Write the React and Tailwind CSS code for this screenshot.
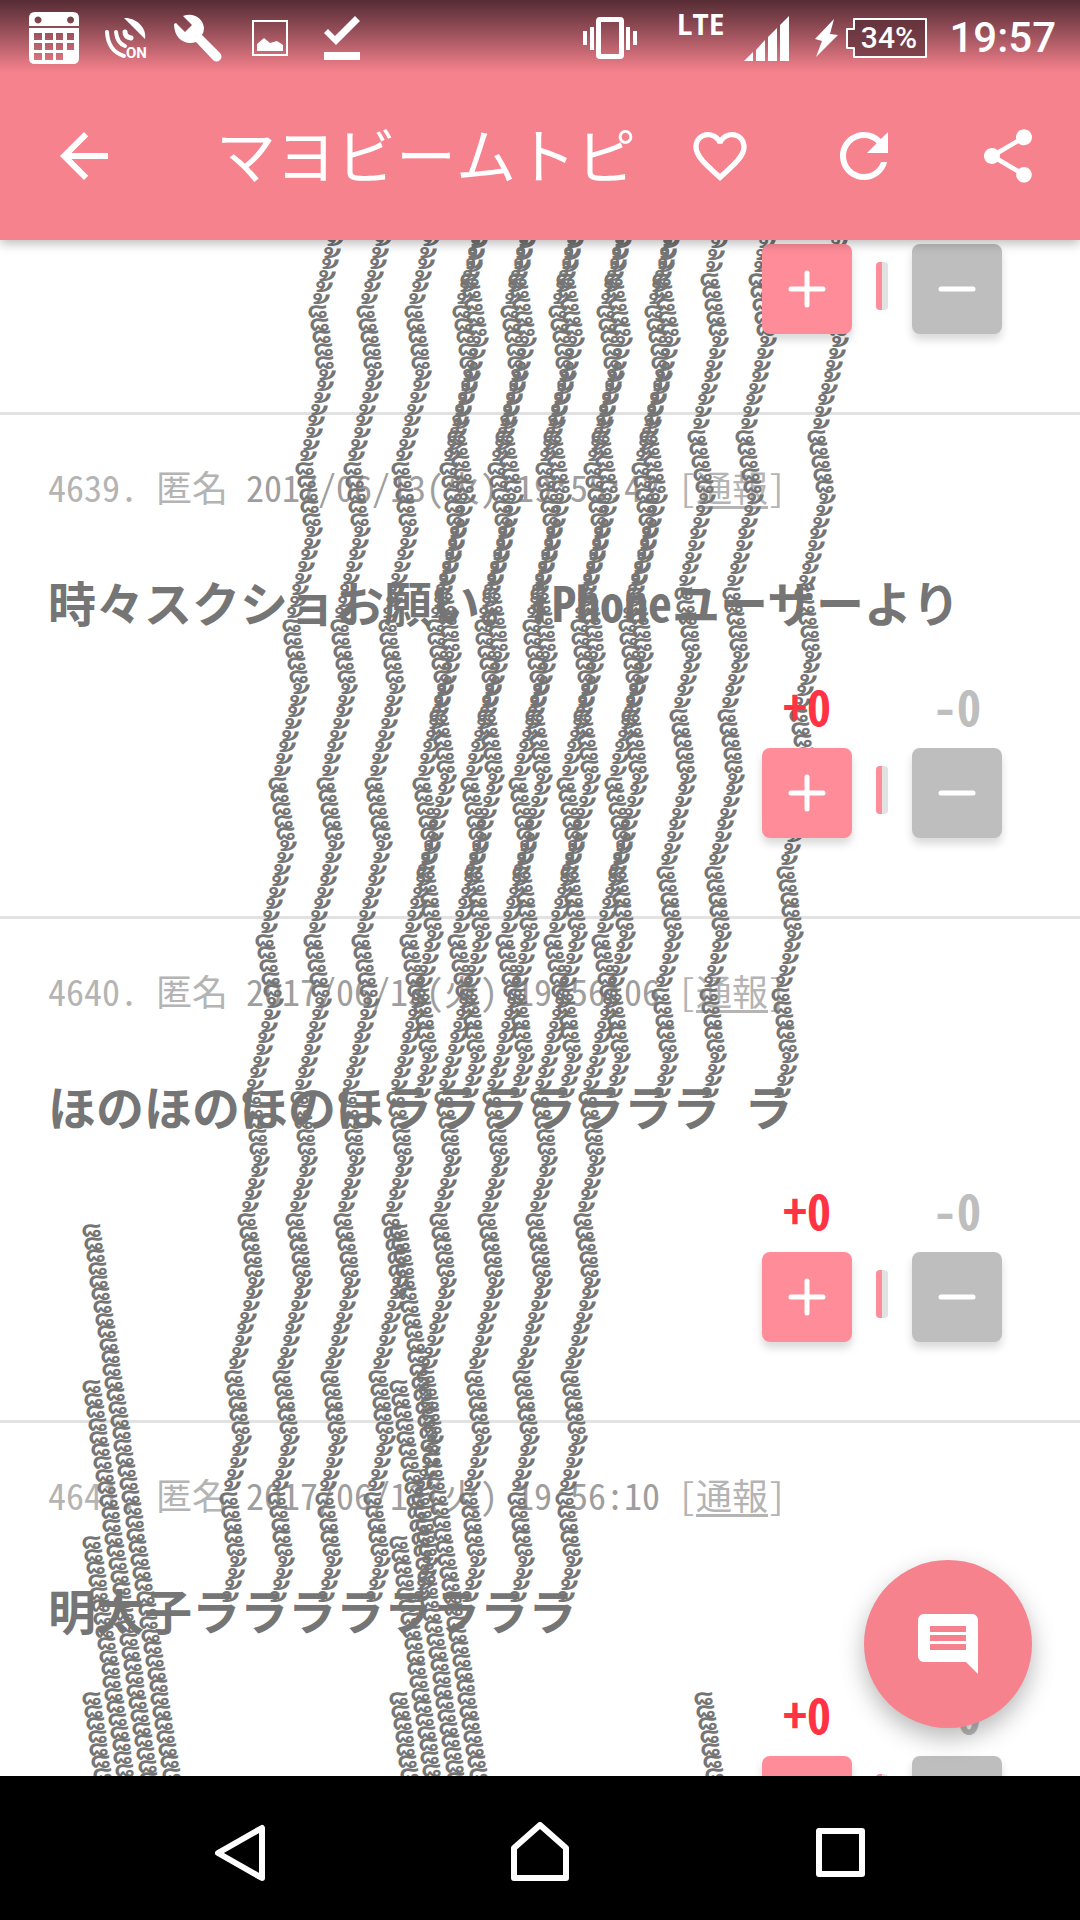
import { MdArrowBack, MdComment, MdFavoriteBorder, MdRefresh, MdShare } from "react-icons/md";

const THO = "\u0e49";
const TAI = "\u0e47";

// marks that pile up over one character, lowest first
const WAVE = [
  ...(THO.repeat(4) + TAI.repeat(5) + THO.repeat(5) + TAI.repeat(5)),
  ...(THO.repeat(8) + TAI.repeat(5) + THO.repeat(5) + TAI.repeat(5)),
  ...(THO.repeat(8) + TAI.repeat(5)).repeat(6),
];

// how far the next mark moves from the one below it
const STEP = {
  [THO + THO]: [2.76, 11.65],
  [THO + TAI]: [-3, 12],
  [TAI + TAI]: [-1.85, 12.65],
  [TAI + THO]: [4.3, 13],
};

const climb = (marks, x0, y0) => {
  let x = x0;
  let y = y0;
  return marks.map((mark, i) => {
    if (i > 0) {
      const [dx, dy] = STEP[marks[i - 1] + mark];
      x += dx;
      y -= dy;
    }
    return { mark, x: Math.round(x), y: Math.round(y) };
  });
};

const POSTS = [
  {
    id: 4639,
    date: "2017/06/13(火) 19:55:42",
    lead: "時々スクショお願い。iPhoneユーザーより",
    beams: "",
    count: 0,
  },
  {
    id: 4640,
    date: "2017/06/13(火) 19:56:06",
    lead: "ほのほのほのほ",
    beams: "ラララララララ ラ",
    count: 71,
  },
  {
    id: 4641,
    date: "2017/06/13(火) 19:56:10",
    lead: "明太子",
    beams: "ララララララララ",
    count: 113,
  },
];

// tops of the beams that rise from posts further down the thread
const RISING = [
  { x: 91, y: 990, count: 44 },
  { x: 91, y: 1146, count: 32 },
  { x: 91, y: 1302, count: 19 },
  { x: 91, y: 1458, count: 7 },
  { x: 398, y: 990, count: 44 },
  { x: 398, y: 1146, count: 32 },
  { x: 398, y: 1302, count: 19 },
  { x: 398, y: 1458, count: 7 },
  { x: 703, y: 1458, count: 7 },
];

const Mark = ({ mark, x, y }) => (
  <span
    className={
      mark === THO
        ? "absolute whitespace-pre text-[44px] leading-[48px]"
        : "absolute whitespace-pre text-[46px] leading-[48px]"
    }
    style={mark === THO ? { left: x - 1, top: y - 10 } : { left: x + 2, top: y - 9 }}
  >
    {"\u00a0" + mark}
  </span>
);

const Beam = ({ points }) => (
  <span
    aria-hidden="true"
    className="pointer-events-none absolute left-0 top-0 font-['Noto_Sans_Thai_Looped',sans-serif] font-medium text-[#757575]"
  >
    {points.map((p, i) => (
      <Mark key={i} {...p} />
    ))}
  </span>
);

const Votes = () => (
  <div className="relative z-20 flex items-end justify-end gap-6 pr-[78px]">
    <div className="flex w-[90px] flex-col items-center gap-[15px]">
      <span className="text-[48px] font-bold leading-[56px] text-[#ff3344]">+0</span>
      <button
        aria-label="プラス"
        className="flex h-[90px] w-full items-center justify-center rounded-lg bg-[#ff8d99] shadow-[0_6px_8px_rgba(0,0,0,0.15)]"
      >
        <svg width="38" height="38" viewBox="0 0 38 38" stroke="#fff" strokeWidth="5" strokeLinecap="round">
          <path d="M3 19H35M19 3V35" />
        </svg>
      </button>
    </div>
    <div className="mb-6 flex h-12 w-3 overflow-hidden rounded bg-[#e2e2e2]">
      <div className="w-1/2 bg-[#ff8d99]" />
    </div>
    <div className="flex w-[90px] flex-col items-center gap-[15px]">
      <span className="text-[48px] font-bold leading-[56px] text-[#bebebe]">-0</span>
      <button
        aria-label="マイナス"
        className="flex h-[90px] w-full items-center justify-center rounded-lg bg-[#bebebe] shadow-[0_6px_8px_rgba(0,0,0,0.15)]"
      >
        <svg width="38" height="38" viewBox="0 0 38 38" stroke="#fff" strokeWidth="5" strokeLinecap="round">
          <path d="M3 19H35" />
        </svg>
      </button>
    </div>
  </div>
);

const Post = ({ post }) => {
  const points = climb(WAVE.slice(0, post.count), 38, 23);

  return (
    <article className="border-b-[3px] border-[#e2e2e2] pb-[78px] pt-[45px]">
      <div className="whitespace-pre px-12 text-[36px] leading-[52px] text-[#b4b4b4]">
        {post.id}. 匿名 <span className="text-[#9e9e9e]">{post.date}</span> [
        <a href="#report" className="underline decoration-[3px] underline-offset-4">通報</a>]
      </div>
      <p className="mt-[53px] whitespace-pre px-12 text-[48px] font-bold leading-[72px] text-[#757575]">
        {post.lead}
        {[...post.beams].map((ch, i) =>
          ch === " " ? " " : (
            <span key={i} className="relative inline-block">
              {ch}
              <Beam points={points} />
            </span>
          )
        )}
      </p>
      <div className="mt-10">
        <Votes />
      </div>
    </article>
  );
};

const StatusBar = () => (
  <div className="flex h-[72px] items-center bg-linear-to-b from-[#562c35] to-[#f6828d] pl-[18px] pr-6 pt-1 text-white">
    <div className="flex w-[72px] justify-center">
      <svg width="50" height="52" viewBox="0 0 50 52" fill="currentColor">
        <path
          fillRule="evenodd"
          d="M6 0H44Q50 0 50 6V14H0V6Q0 0 6 0ZM9 4.500a3.500 3.500 0 1 0 .1 0ZM41.500 4.500a3.500 3.500 0 1 0 .1 0ZM0 16H50V46Q50 52 44 52H6Q0 52 0 46ZM5 21h8v7H5ZM16 21h8v7h-8ZM27 21h7v7h-7ZM38 21h7v7h-7ZM5 31h8v7H5ZM16 31h8v7h-8ZM27 31h7v7h-7ZM38 31h7v7h-7ZM5 41h8v7H5ZM16 41h8v7h-8ZM27 41h7v7h-7Z"
        />
      </svg>
    </div>
    <div className="flex w-[72px] justify-center">
      <svg width="44" height="42" viewBox="0 0 44 42" fill="none" stroke="currentColor" strokeWidth="4" strokeLinecap="round">
        <path fill="currentColor" stroke="none" d="M20 1C30 0 43 9 41 22Z" />
        <path d="M21 15q0 5 6 6" strokeWidth="5" />
        <path d="M12 15q1 11 9 14" />
        <path d="M3 15q1 19 17 24" />
        <text x="22" y="41" fill="currentColor" stroke="none" className="font-['Roboto'] text-[15px] font-bold">ON</text>
      </svg>
    </div>
    <div className="flex w-[72px] justify-center">
      <svg width="48" height="48" viewBox="0 0 48 48" fill="currentColor">
        <path d="M9 2C18-2 29 3 30 14Q30 18 28 21L46 39Q49 43 46 46Q43 49 39 46L22 28C12 32 0 25 0 10L2 9L11 18L18 11Z" />
      </svg>
    </div>
    <div className="flex w-[72px] justify-center">
      <svg width="36" height="36" viewBox="0 0 36 36">
        <rect x="1" y="1" width="34" height="34" fill="none" stroke="currentColor" strokeWidth="2" />
        <path fill="currentColor" d="M5 31V24L12 18L18 23L25 21L31 25V31Z" />
      </svg>
    </div>
    <div className="flex w-[72px] justify-center">
      <svg width="36" height="44" viewBox="0 0 36 44" fill="currentColor">
        <path d="M0 17L4 13L11 20L31 0L36 5L12 29ZM0 36H36V44H0Z" />
      </svg>
    </div>

    <svg className="ml-auto" width="54" height="42" viewBox="0 0 54 42" fill="currentColor">
      <path fillRule="evenodd" d="M17 0H37Q41 0 41 4V38Q41 42 37 42H17Q13 42 13 38V4Q13 0 17 0ZM18 5V37H36V5Z" />
      <path d="M0 14h4v14H0ZM7 10h4v23H7ZM43 10h4v23h-4ZM50 14h4v14h-4Z" />
    </svg>
    <span className="mb-7 ml-10 font-['Open_Sans'] text-[28px] font-bold leading-[32px]">LTE</span>
    <svg className="ml-5" width="45" height="45" viewBox="0 0 45 45" fill="currentColor">
      <path d="M0 45L9 36V45ZM12 45V34L21 24V45ZM24 45V21L33 12V45ZM36 45V9L45 0V45Z" />
    </svg>
    <svg className="ml-[26px]" width="23" height="38" viewBox="0 0 23 38" fill="currentColor">
      <path d="M19 0L15 15L23 16L1 38L7 22L0 20Z" />
    </svg>
    <div className="relative ml-2 flex h-10 w-[81px] items-center justify-center pl-1">
      <svg className="absolute inset-0" width="81" height="40" viewBox="0 0 81 40">
        <path
          d="M8 1H80V39H8V30H1V11H8Z"
          fill="#562c35"
          fillOpacity=".65"
          stroke="currentColor"
          strokeWidth="2"
          strokeLinejoin="round"
        />
      </svg>
      <span className="relative font-['Roboto'] text-[30px] font-medium leading-[36px]">34%</span>
    </div>
    <span className="ml-[22px] font-['Roboto'] text-[42px] font-medium leading-[50px]">19:57</span>
  </div>
);

const AppBar = () => (
  <div className="flex h-[168px] items-center text-white">
    <button aria-label="戻る" className="flex h-full w-[168px] items-center justify-center">
      <MdArrowBack size={72} />
    </button>
    <h1 className="ml-12 min-w-0 flex-1 whitespace-nowrap pb-1.5 text-[60px] font-medium leading-[88px]">
      マヨビームトピ
    </h1>
    <button aria-label="お気に入り" className="flex h-full w-36 items-center justify-center">
      <MdFavoriteBorder size={64} />
    </button>
    <button aria-label="更新" className="flex h-full w-36 items-center justify-center">
      <MdRefresh size={72} />
    </button>
    <button aria-label="共有" className="flex h-full w-36 items-center justify-center">
      <MdShare size={64} />
    </button>
  </div>
);

const NavBar = () => (
  <nav className="flex h-36 items-center justify-center gap-[240px] bg-black pt-2 text-white">
    <button aria-label="戻る" className="flex w-[60px] justify-center">
      <svg width="60" height="60" viewBox="0 0 60 60" fill="none" stroke="currentColor" strokeWidth="6" strokeLinejoin="round">
        <path d="M52 6V56L8 31Z" />
      </svg>
    </button>
    <button aria-label="ホーム" className="flex w-[60px] justify-center">
      <svg width="60" height="60" viewBox="0 0 60 60" fill="none" stroke="currentColor" strokeWidth="6" strokeLinejoin="round">
        <path d="M4 56V26L30 3L56 26V56Z" />
      </svg>
    </button>
    <button aria-label="履歴" className="flex w-[60px] justify-center">
      <svg width="49" height="49" viewBox="0 0 49 49" fill="none" stroke="currentColor" strokeWidth="6" strokeLinejoin="round">
        <path d="M3 3H46V46H3Z" />
      </svg>
    </button>
  </nav>
);

export default function App() {
  return (
    <div className="flex h-screen flex-col bg-white font-['Noto_Sans_Mono_CJK_JP','Noto_Sans_CJK_JP',sans-serif]">
      <header className="relative z-30 bg-[#f6828d] shadow-[0_4px_10px_rgba(0,0,0,0.25)]">
        <StatusBar />
        <AppBar />
      </header>

      <main className="relative min-h-0 flex-1 overflow-hidden">
        {/* tail of the post that is scrolled under the bar */}
        <div className="-mt-[67px] border-b-[3px] border-[#e2e2e2] pb-[78px]">
          <Votes />
        </div>
        {POSTS.map((post) => (
          <Post key={post.id} post={post} />
        ))}
        {RISING.map((b) => (
          <Beam
            key={`${b.x}-${b.y}`}
            points={climb(
              Array(b.count).fill(TAI),
              b.x + (b.count - 1) * 1.85,
              b.y + (b.count - 1) * 12.65
            )}
          />
        ))}
        <button
          aria-label="コメントする"
          className="absolute bottom-12 right-12 z-40 flex h-[168px] w-[168px] items-center justify-center rounded-full bg-[#f6828d] text-white shadow-[0_10px_24px_rgba(0,0,0,0.28)]"
        >
          <MdComment size={72} />
        </button>
      </main>

      <NavBar />
    </div>
  );
}
